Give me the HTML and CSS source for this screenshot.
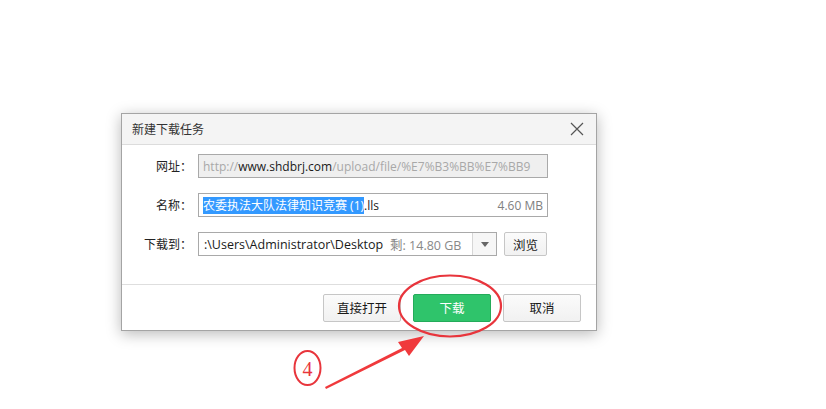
FILE: index.html
```html
<!DOCTYPE html>
<html>
<head>
<meta charset="utf-8">
<link rel="stylesheet" href="styles.css">
</head>
<body>
<div class="dialog">
  <div class="titlebar">
    <span class="title">新建下载任务</span>
    <svg class="close" width="14" height="14" viewBox="0 0 14 14"><path d="M1 1L13 13M13 1L1 13" stroke="#555" stroke-width="1.2" fill="none"/></svg>
  </div>
  <div class="body">
    <div class="row">
      <span class="label">网址：</span>
      <div class="field url"><span class="dim">http://</span><span class="dark">www.shdbrj.com</span><span class="dim">/upload/file/%E7%B3%BB%E7%BB9</span></div>
    </div>
    <div class="row">
      <span class="label">名称：</span>
      <div class="field name"><span class="sel">农委执法大队法律知识竞赛 (1)</span><span class="dark">.lls</span><span class="size">4.60 MB</span></div>
    </div>
    <div class="row">
      <span class="label">下载到：</span>
      <div class="combo">
        <div class="combo-text"><span class="dark">:\Users\Administrator\Desktop</span><span class="free">剩: 14.80 GB</span></div>
        <div class="combo-arrow"><svg width="8" height="5" viewBox="0 0 8 5"><path d="M0 0H8L4 5Z" fill="#666"/></svg></div>
      </div>
      <button class="btn browse">浏览</button>
    </div>
  </div>
  <div class="footer">
    <button class="btn foot">直接打开</button>
    <button class="btn foot green">下载</button>
    <button class="btn foot">取消</button>
  </div>
</div>
<svg class="annot" width="826" height="409" viewBox="0 0 826 409">
  <ellipse cx="450" cy="306" rx="51" ry="30.5" fill="none" stroke="#e8353c" stroke-width="2.2"/>
  <path d="M325 387 L402 348 L398 342 L424 336 L409 356 L405 350 L326 389 Z" fill="#f0393c"/>
  <ellipse cx="307.5" cy="368" rx="13" ry="17" fill="none" stroke="#e8353c" stroke-width="2"/>
  <text x="307.5" y="376" text-anchor="middle" class="num">4</text>
</svg>
</body>
</html>
```
FILE: styles.css
```css
* { box-sizing: border-box; }
html, body { margin: 0; padding: 0; background: #fff; }
body {
  width: 826px;
  height: 409px;
  position: relative;
  overflow: hidden;
  font-family: "Open Sans", "Noto Sans CJK SC", sans-serif;
  font-size: 12px;
  color: #222;
}
.dialog {
  margin: 113px 0 0 121px;
  width: 476px;
  height: 218px;
  border: 1px solid #a4a4a4;
  background: #fff;
  box-shadow: 0 3px 14px rgba(0,0,0,0.28);
  display: flex;
  flex-direction: column;
}
.titlebar {
  height: 31px;
  background: #f4f4f4;
  border-bottom: 1px solid #dcdcdc;
  display: flex;
  align-items: center;
  justify-content: space-between;
  padding: 0 12px 0 10px;
}
.title { font-size: 12px; color: #333; }
.close { display: block; }
.body {
  flex: 1;
  display: flex;
  flex-direction: column;
  gap: 15px;
  padding: 9px 0 0 0;
  border-bottom: 1px solid #dedede;
}
.row {
  display: flex;
  align-items: center;
  height: 24px;
}
.label {
  width: 76px;
  text-align: right;
  padding-right: 6px;
  font-size: 12px;
  color: #222;
}
.field {
  width: 350px;
  height: 24px;
  border: 1px solid #a9a9a9;
  display: flex;
  align-items: center;
  padding: 0 4px;
  white-space: nowrap;
  overflow: hidden;
  font-size: 12px;
}
.url { background: #efefef; }
.dim { color: #a8a8a8; }
.dark { color: #1a1a1a; }
.sel { background: #3399ff; color: #fff; line-height: 17px; }
.size { margin-left: auto; color: #808080; }
.combo {
  width: 299px;
  height: 24px;
  border: 1px solid #a9a9a9;
  display: flex;
  font-size: 12.5px;
}
.combo-text {
  flex: 1;
  display: flex;
  align-items: center;
  padding: 0 5px;
  white-space: nowrap;
  overflow: hidden;
}
.free { color: #888; margin-left: 7px; }
.combo-arrow {
  width: 24px;
  border-left: 1px solid #d6d6d6;
  background: #f6f6f6;
  display: flex;
  align-items: center;
  justify-content: center;
}
.btn {
  font-family: "Open Sans", "Noto Sans CJK SC", sans-serif;
  font-size: 12.5px;
  color: #1a1a1a;
  border: 1px solid #c6c6c6;
  border-radius: 2px;
  background: linear-gradient(#fbfbfb, #f1f1f1);
  padding: 0;
}
.browse {
  width: 43px;
  height: 24px;
  margin-left: 7px;
}
.footer {
  height: 45px;
  display: flex;
  align-items: center;
  justify-content: flex-end;
  gap: 12px;
  padding: 0 15px 0 0;
}
.foot { width: 78px; height: 28px; }
.green {
  background: #2fc46b;
  border-color: #24ab5a;
  color: #fff;
}
.annot {
  position: absolute;
  left: 0;
  top: 0;
  pointer-events: none;
}
.num {
  font-family: "Liberation Serif", serif;
  font-size: 20px;
  fill: #e8353c;
}
```
